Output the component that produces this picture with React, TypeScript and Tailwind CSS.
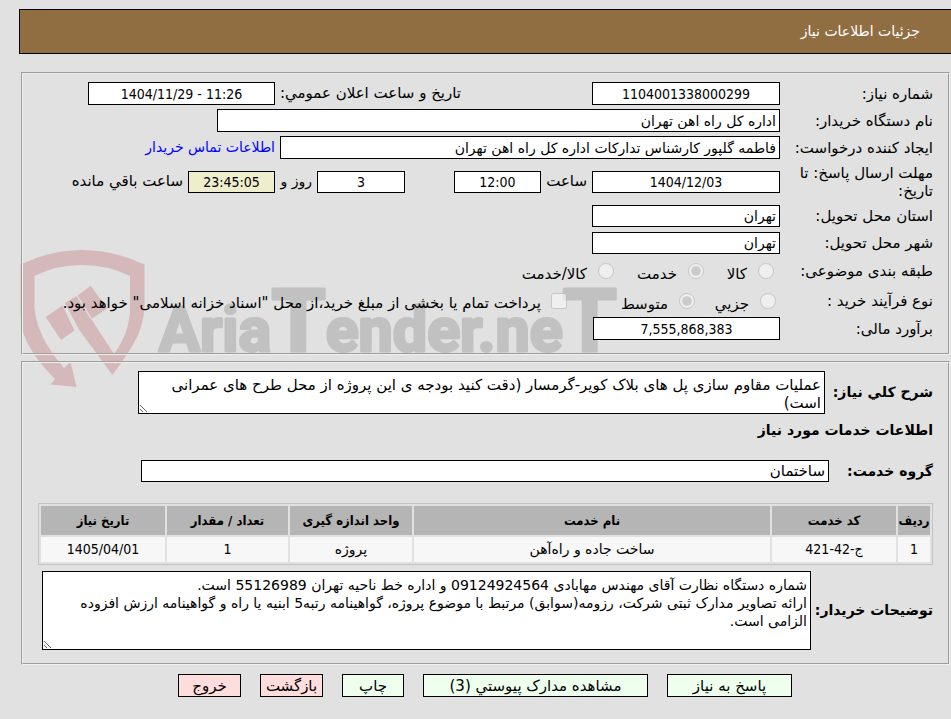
import React from "react";

const box = "box-border shrink-0 border border-black bg-white px-[3px] text-[14px] text-black outline-none";
const numeric = "text-center font-['DejaVu_Sans_Condensed','DejaVu_Sans',sans-serif]";
const area =
  "ml-[4px] flex-1 overflow-hidden border border-black bg-white px-[3px] py-[4px] leading-[18px] outline-none";
const fieldsetClass =
  "relative ml-[2px] mr-px min-w-0 border-2 border-[#f0f0f0] px-[15px] [border-style:groove]";

function Watermark() {
  return (
    <svg
      className="pointer-events-none absolute left-0 top-[240px] -z-10"
      width="640"
      height="160"
      viewBox="0 240 640 160"
      aria-hidden="true"
    >
      <g fill="#d5b8b9">
        <path d="M20.500 264.500Q50 250 82 250Q114 250 144.500 264.500V306Q144 328 131 348Q122 362 112.500 375L78.500 329L90.500 318L114 354Q130 332 130 308V276Q108 265 82 265Q56 265 34.500 276V308Q36 326 47 345Q55 358 64 368L70.600 362L76.500 387L50.600 384.600L55 379Q34 358 26 340Q20.500 328 20.500 310Z" />
        <path d="M45.700 317L62.500 305.500L74.500 330.500L61 340Z" />
        <path d="M65 303L76.500 296L91 319.500L79 329.500Z" />
        <path d="M77.700 295.500L90.700 285.700L107 308.500L92 318.500Z" />
      </g>
      <text
        direction="ltr"
        x="159"
        y="351"
        fill="#c1c1c1"
        stroke="#c1c1c1"
        strokeWidth="3"
        strokeLinejoin="round"
        className="font-['Roboto',sans-serif] text-[61px] font-bold"
      >
        Aria<tspan className="text-[88px]">T</tspan>ender.ne<tspan className="text-[88px]">T</tspan>
      </text>
    </svg>
  );
}

function Row({
  id,
  label,
  tall,
  children,
}: {
  id?: string;
  label: string;
  tall?: string;
  children: React.ReactNode;
}) {
  return (
    <div className={`flex items-center ${tall ?? "h-[27px]"}`}>
      <label htmlFor={id} className="w-[153px] shrink-0 pl-2 leading-[18px]">
        {label}
      </label>
      {children}
    </div>
  );
}

function Choice({
  type,
  name,
  label,
  checked,
  className,
}: {
  type: "radio" | "checkbox";
  name: string;
  label: string;
  checked?: boolean;
  className?: string;
}) {
  return (
    <label className={`flex shrink-0 items-center whitespace-nowrap ${className ?? ""}`}>
      <input type={type} name={name} defaultChecked={checked} disabled className="m-0 size-4 shrink-0" />
      <span className={type === "radio" ? "pt-[6px]" : "pt-[4px]"}>{label}</span>
    </label>
  );
}

const columns = [
  { title: "ردیف", value: "1", width: "w-[32px]", number: true },
  { title: "کد خدمت", value: "ج-42-421", width: "w-[124px]", number: true },
  { title: "نام خدمت", value: "ساخت جاده و راه‌آهن", width: "", number: false },
  { title: "واحد اندازه گیری", value: "پروژه", width: "w-[122px]", number: false },
  { title: "تعداد / مقدار", value: "1", width: "w-[121px]", number: true },
  { title: "تاریخ نیاز", value: "1405/04/01", width: "w-[124px]", number: true },
];

const actions = [
  { text: "پاسخ به نیاز", style: "w-[125px] bg-[#eeffee]" },
  { text: "مشاهده مدارک پیوستي (3)", style: "w-[225px] bg-[#eeffee]" },
  { text: "چاپ", style: "w-[62px] bg-[#eeffee]" },
  { text: "بازگشت", style: "w-[63px] bg-[#ffdddd]" },
  { text: "خروج", style: "w-[63px] bg-[#ffdddd]" },
];

export default function App() {
  return (
    <div
      dir="rtl"
      className="relative isolate min-h-screen bg-[#e1e1e1] pl-[19px] pt-[9px] font-['DejaVu_Sans',sans-serif] text-[15px] text-black"
    >
      <Watermark />
      <header className="flex h-[45px] items-center border-y border-l border-black bg-[#906e41] pr-[31px] text-[14px] text-white">
        <h1>جزئیات اطلاعات نیاز</h1>
      </header>

      <fieldset className={`${fieldsetClass} mt-[18px] pb-[12px] pt-[6px]`}>
        <Row id="need-no" label="شماره نیاز:">
          <input id="need-no" readOnly defaultValue="1104001338000299" className={`${box} ${numeric} h-[23px] w-[188px]`} />
          <label htmlFor="announce" className="mr-[131px] w-[186px] shrink-0 whitespace-nowrap">
            تاریخ و ساعت اعلان عمومي:
          </label>
          <input id="announce" dir="ltr" readOnly defaultValue="1404/11/29 - 11:26" className={`${box} ${numeric} h-[23px] w-[187px]`} />
        </Row>
        <Row id="buyer" label="نام دستگاه خریدار:">
          <input id="buyer" readOnly defaultValue="اداره کل راه اهن تهران" className={`${box} h-[23px] w-[563px]`} />
        </Row>
        <Row id="creator" label="ایجاد کننده درخواست:">
          <input id="creator" readOnly defaultValue="فاطمه گلپور کارشناس تدارکات اداره کل راه اهن تهران" className={`${box} h-[23px] w-[500px]`} />
          <a href="#contact" className="mr-[5px] whitespace-nowrap text-[14px] text-[#0000ff]">
            اطلاعات تماس خریدار
          </a>
        </Row>
        <Row id="deadline" label="مهلت ارسال پاسخ: تا تاریخ:" tall="h-[41px]">
          <input id="deadline" readOnly defaultValue="1404/12/03" className={`${box} ${numeric} h-[22px] w-[188px]`} />
          <label htmlFor="hour" className="w-[51px] shrink-0 pr-[5px]">ساعت</label>
          <input id="hour" readOnly defaultValue="12:00" className={`${box} ${numeric} h-[22px] w-[87px]`} />
          <input id="days" readOnly defaultValue="3" className={`${box} ${numeric} mr-[49px] h-[22px] w-[88px]`} />
          <label htmlFor="days" className="w-[42px] shrink-0 whitespace-nowrap pr-[5px] text-[14px]">روز و</label>
          <input id="remaining" readOnly defaultValue="23:45:05" className={`${numeric} box-border h-[22px] w-[87px] shrink-0 border border-black bg-[#eeeecc] px-1 text-[14px] outline-none`} />
          <label htmlFor="remaining" className="mr-[5px] whitespace-nowrap">ساعت باقي مانده</label>
        </Row>
        <Row id="province" label="استان محل تحویل:">
          <input id="province" readOnly defaultValue="تهران" className={`${box} h-[22px] w-[188px]`} />
        </Row>
        <Row id="city" label="شهر محل تحویل:">
          <input id="city" readOnly defaultValue="تهران" className={`${box} h-[22px] w-[188px]`} />
        </Row>
        <Row label="طبقه بندی موضوعی:" tall="h-[30px]">
          <Choice type="radio" name="subject" label="کالا" className="mr-[6px] w-[70px] gap-[11px]" />
          <Choice type="radio" name="subject" label="خدمت" checked className="w-[90px] gap-[11px]" />
          <Choice type="radio" name="subject" label="کالا/خدمت" className="gap-[11px]" />
        </Row>
        <Row label="نوع فرآیند خرید :" tall="h-[30px]">
          <Choice type="radio" name="process" label="جزیي" className="mr-[4px] w-[81px] gap-[11px]" />
          <Choice type="radio" name="process" label="متوسط" checked className="w-[128px] gap-[11px]" />
          <Choice
            type="checkbox"
            name="treasury"
            label={'پرداخت تمام یا بخشی از مبلغ خرید،از محل "اسناد خزانه اسلامی" خواهد بود.'}
            className="gap-[10px]"
          />
        </Row>
        <Row id="estimate" label="برآورد مالی:" tall="h-[25px]">
          <input id="estimate" readOnly defaultValue="7,555,868,383" className={`${box} ${numeric} h-[23px] w-[187px]`} />
        </Row>
      </fieldset>

      <fieldset className={`${fieldsetClass} mt-[6px] pb-[13px] pt-[8px]`}>
        <div className="flex items-center pl-[96px]">
          <label htmlFor="summary" className="w-[108px] shrink-0 whitespace-nowrap text-[14px] font-bold">شرح کلي نیاز:</label>
          <textarea
            id="summary"
            readOnly
            defaultValue="عملیات مقاوم سازی پل های بلاک کویر-گرمسار (دقت کنید بودجه ی این پروژه از محل طرح های عمرانی است)"
            className={`${area} h-[43px]`}
          />
        </div>
        <h2 className="h-[46px] pt-[6px] text-[14px] font-bold">اطلاعات خدمات مورد نیاز</h2>
        <div className="flex items-center">
          <label htmlFor="group" className="w-[104px] shrink-0 text-[14px] font-bold">گروه خدمت:</label>
          <input id="group" readOnly defaultValue="ساختمان" className="ml-[103px] h-[22px] flex-1 border border-black bg-white px-[3px] outline-none" />
        </div>
        <table className="mt-[21px] w-full table-fixed border-separate border-spacing-[2px] border border-[#c3c3c3] text-center">
          <thead>
            <tr className="h-[29px]">
              {columns.map((c) => (
                <th
                  key={c.title}
                  className={`${c.width} whitespace-nowrap bg-[#b5b5b5] p-0 font-['DejaVu_Sans_Condensed','DejaVu_Sans',sans-serif] text-[13px] font-bold`}
                >
                  {c.title}
                </th>
              ))}
            </tr>
          </thead>
          <tbody>
            <tr className="h-[25px]">
              {columns.map((c) => (
                <td key={c.title} className={`bg-[#f7f7f7] p-0 text-[14px] ${c.number ? numeric : ""}`}>
                  {c.value}
                </td>
              ))}
            </tr>
          </tbody>
        </table>
        <div className="mt-[6px] flex items-center">
          <label htmlFor="notes" className="w-[122px] shrink-0 whitespace-nowrap text-[14px] font-bold">توضیحات خریدار:</label>
          <textarea
            id="notes"
            readOnly
            defaultValue={
              "شماره دستگاه نظارت آقای مهندس مهابادی 09124924564 و اداره خط ناحیه تهران 55126989 است.\nارائه تصاویر مدارک ثبتی شرکت، رزومه(سوابق) مرتبط با موضوع پروژه، گواهینامه رتبه5 ابنیه یا راه و گواهینامه ارزش افزوده الزامی است."
            }
            className={`${area} h-[79px] text-[14px]`}
          />
        </div>
      </fieldset>

      <div className="mt-[9px] flex justify-center gap-[19px]">
        {actions.map((a) => (
          <button key={a.text} type="button" className={`${a.style} h-[23px] whitespace-nowrap border border-black text-center leading-[18px]`}>
            {a.text}
          </button>
        ))}
      </div>
    </div>
  );
}
